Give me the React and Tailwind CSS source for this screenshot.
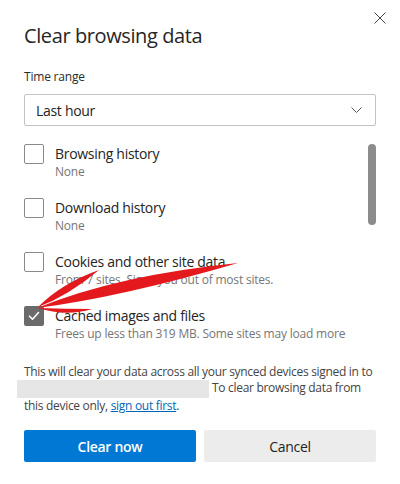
import React from 'react';

const items = [
  { label: 'Browsing history', sub: 'None', checked: false },
  { label: 'Download history', sub: 'None', checked: false },
  { label: 'Cookies and other site data', sub: 'From 7 sites. Signs you out of most sites.', checked: false },
  { label: 'Cached images and files', sub: 'Frees up less than 319 MB. Some sites may load more', checked: true },
];

const Checkbox = ({ checked }) =>
  checked ? (
    <div className="w-[20px] h-[20px] shrink-0 rounded-[2px] bg-[#6b6b6b] flex items-center justify-center">
      <svg width="12" height="10" viewBox="0 0 12 10" fill="none">
        <path d="M1.5 5.2 L4.5 8.2 L10.5 1.5" stroke="white" strokeWidth="1.6" strokeLinecap="round" strokeLinejoin="round" />
      </svg>
    </div>
  ) : (
    <div className="w-[20px] h-[20px] shrink-0 rounded-[2px] border border-[#8a8a8a] bg-white" />
  );

export default function App() {
  return (
    <div
      className="relative w-[400px] h-[484px] bg-white overflow-hidden"
      style={{ fontFamily: '"Open Sans", "Noto Sans", sans-serif' }}
    >
      {/* close */}
      <button className="absolute top-[12px] left-[374px] w-[12px] h-[12px]">
        <svg width="12" height="12" viewBox="0 0 12 12" fill="none">
          <path d="M0.5 0.5 L11.5 11.5 M11.5 0.5 L0.5 11.5" stroke="#444" strokeWidth="1" />
        </svg>
      </button>

      <div className="px-6 pt-[22px]">
        <h1 className="text-[20px] leading-[28px] font-medium text-[#262626] tracking-[-0.4px]">
          Clear browsing data
        </h1>

        <div className="mt-[19px] text-[12px] leading-[16px] text-[#2b2b2b] tracking-[-0.2px]">Time range</div>

        <div className="mt-[9px] h-[32px] border border-[#c4c4c4] rounded-[2px] flex items-center justify-between pl-[11px] pr-[13px]">
          <span className="text-[14px] text-[#242424] tracking-[-0.3px]">Last hour</span>
          <svg width="11" height="6" viewBox="0 0 11 6" fill="none">
            <path d="M0.5 0.5 L5.5 5.5 L10.5 0.5" stroke="#555" strokeWidth="1" />
          </svg>
        </div>

        <div className="flex mt-[18px]">
          <div className="flex-1 flex flex-col gap-[18px]">
            {items.map((it) => (
              <div key={it.label} className="flex gap-[11px]">
                <Checkbox checked={it.checked} />
                <div className="flex flex-col">
                  <span className="text-[14px] leading-[20px] text-[#242424] tracking-[-0.3px]">{it.label}</span>
                  <span className="text-[12px] leading-[16px] text-[#767676] tracking-[-0.2px]">{it.sub}</span>
                </div>
              </div>
            ))}
          </div>
          <div className="w-[8px] h-[81px] rounded-full bg-[#8c8c8c]" />
        </div>

        <p className="mt-[22px] text-[12px] leading-[16px] text-[#444] tracking-[-0.3px] whitespace-nowrap">
          This will clear your data across all your synced devices signed in to
          <br />
          <span className="inline-block align-middle -ml-[7px] w-[192px] h-[18px] bg-[#e6e6e6] mr-[3px]" />
          To clear browsing data from
          <br />
          this device only,{' '}
          <a href="#" className="text-[#0067b8] underline">sign out first</a>.
        </p>

        <div className="mt-[16px] flex gap-[8px]">
          <button className="flex-1 h-[32px] rounded-[2px] bg-[#0078d4] text-white text-[14px] font-semibold tracking-[-0.3px]">
            Clear now
          </button>
          <button className="flex-1 h-[32px] rounded-[2px] bg-[#ececec] text-[#242424] text-[14px] tracking-[-0.3px]">
            Cancel
          </button>
        </div>
      </div>

      {/* red annotation arrow */}
      <svg className="absolute left-0 top-0 pointer-events-none" width="400" height="484" viewBox="0 0 400 484">
        <path d="M37 308 Q 118 275 238 263 Q 122 297 37 308 Z" fill="#e3191e" />
        <path d="M38 307 Q 62 283 99 270 Q 68 296 38 307 Z" fill="#e3191e" />
        <path d="M38 308 Q 66 309 92 309 Q 66 317 38 308 Z" fill="#e3191e" />
      </svg>
    </div>
  );
}
